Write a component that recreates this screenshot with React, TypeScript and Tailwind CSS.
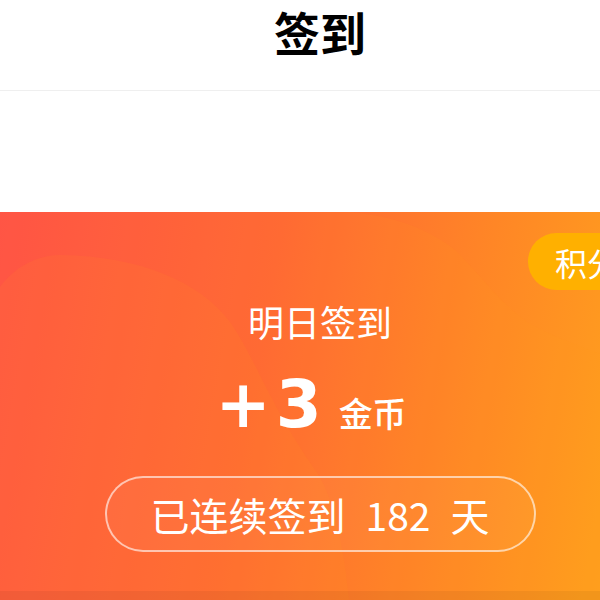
import { useState } from 'react'

const CJK = "font-['Noto_Sans_CJK_SC','Noto_Sans',sans-serif]"

export default function App() {
  const [days] = useState(182)
  const [reward] = useState(3)

  return (
    <div className={`w-[600px] h-[600px] overflow-hidden bg-white ${CJK}`}>
      <div className="w-[640px]">
        {/* 顶部标题 */}
        <div className="h-[91px] border-b border-[#efefef] pt-[3px] text-center">
          <h1 className="text-[46px] leading-[56px] font-bold text-black">签到</h1>
        </div>

        <div className="h-[121px] bg-white" />

        {/* 签到卡片 */}
        <div className="relative h-[400px] overflow-hidden bg-[linear-gradient(100deg,#ff4d4a_0%,#ff6536_40%,#ff8626_70%,#ffa61b_100%)]">
          <svg className="absolute inset-0" width="640" height="400" viewBox="0 0 640 400">
            {/* 背景波浪 */}
            <path
              d="M0 0 L 350 0 C 395 4, 430 18, 455 38 C 480 62, 500 92, 530 112 C 555 125, 590 140, 640 155 L 640 400 L 0 400 Z"
              fill="#ffa01a"
              opacity="0.1"
            />
            <path
              d="M0 75 C 15 55, 35 44, 60 43 C 140 44, 200 70, 230 110 C 255 145, 270 195, 318 262 C 335 290, 345 340, 350 400 L 0 400 Z"
              fill="#ffa01a"
              opacity="0.1"
            />
          </svg>

          <div className="absolute left-[528px] top-[21px] h-[57px] flex items-center pl-[27px] pr-6 rounded-l-full bg-[#ffb000] whitespace-nowrap">
            <span className="text-[32px] leading-none text-white">积分规则</span>
          </div>

          <div className="relative flex flex-col items-center pt-[91px]">
            <p className="text-[36px] leading-[36px] text-white">明日签到</p>

            <div className="mt-[26px] mr-[18px] flex items-baseline text-white">
              <span className="font-['DejaVu_Sans',sans-serif] font-bold text-[66px] leading-[80px] tracking-[5px]">
                +{reward}
              </span>
              <span className="ml-[12px] text-[34px] leading-none font-medium">金币</span>
            </div>

            <div className="mt-[31px] w-[431px] h-[76px] rounded-full border-2 border-white/60 bg-white/[0.04] flex items-center justify-center text-white text-[39px] leading-none">
              <span>已连续签到</span>
              <span className="mx-[20px]">{days}</span>
              <span>天</span>
            </div>
          </div>

          <div className="absolute left-0 right-0 top-[379px] h-[30px] bg-black/[0.05]" />
        </div>
      </div>
    </div>
  )
}
